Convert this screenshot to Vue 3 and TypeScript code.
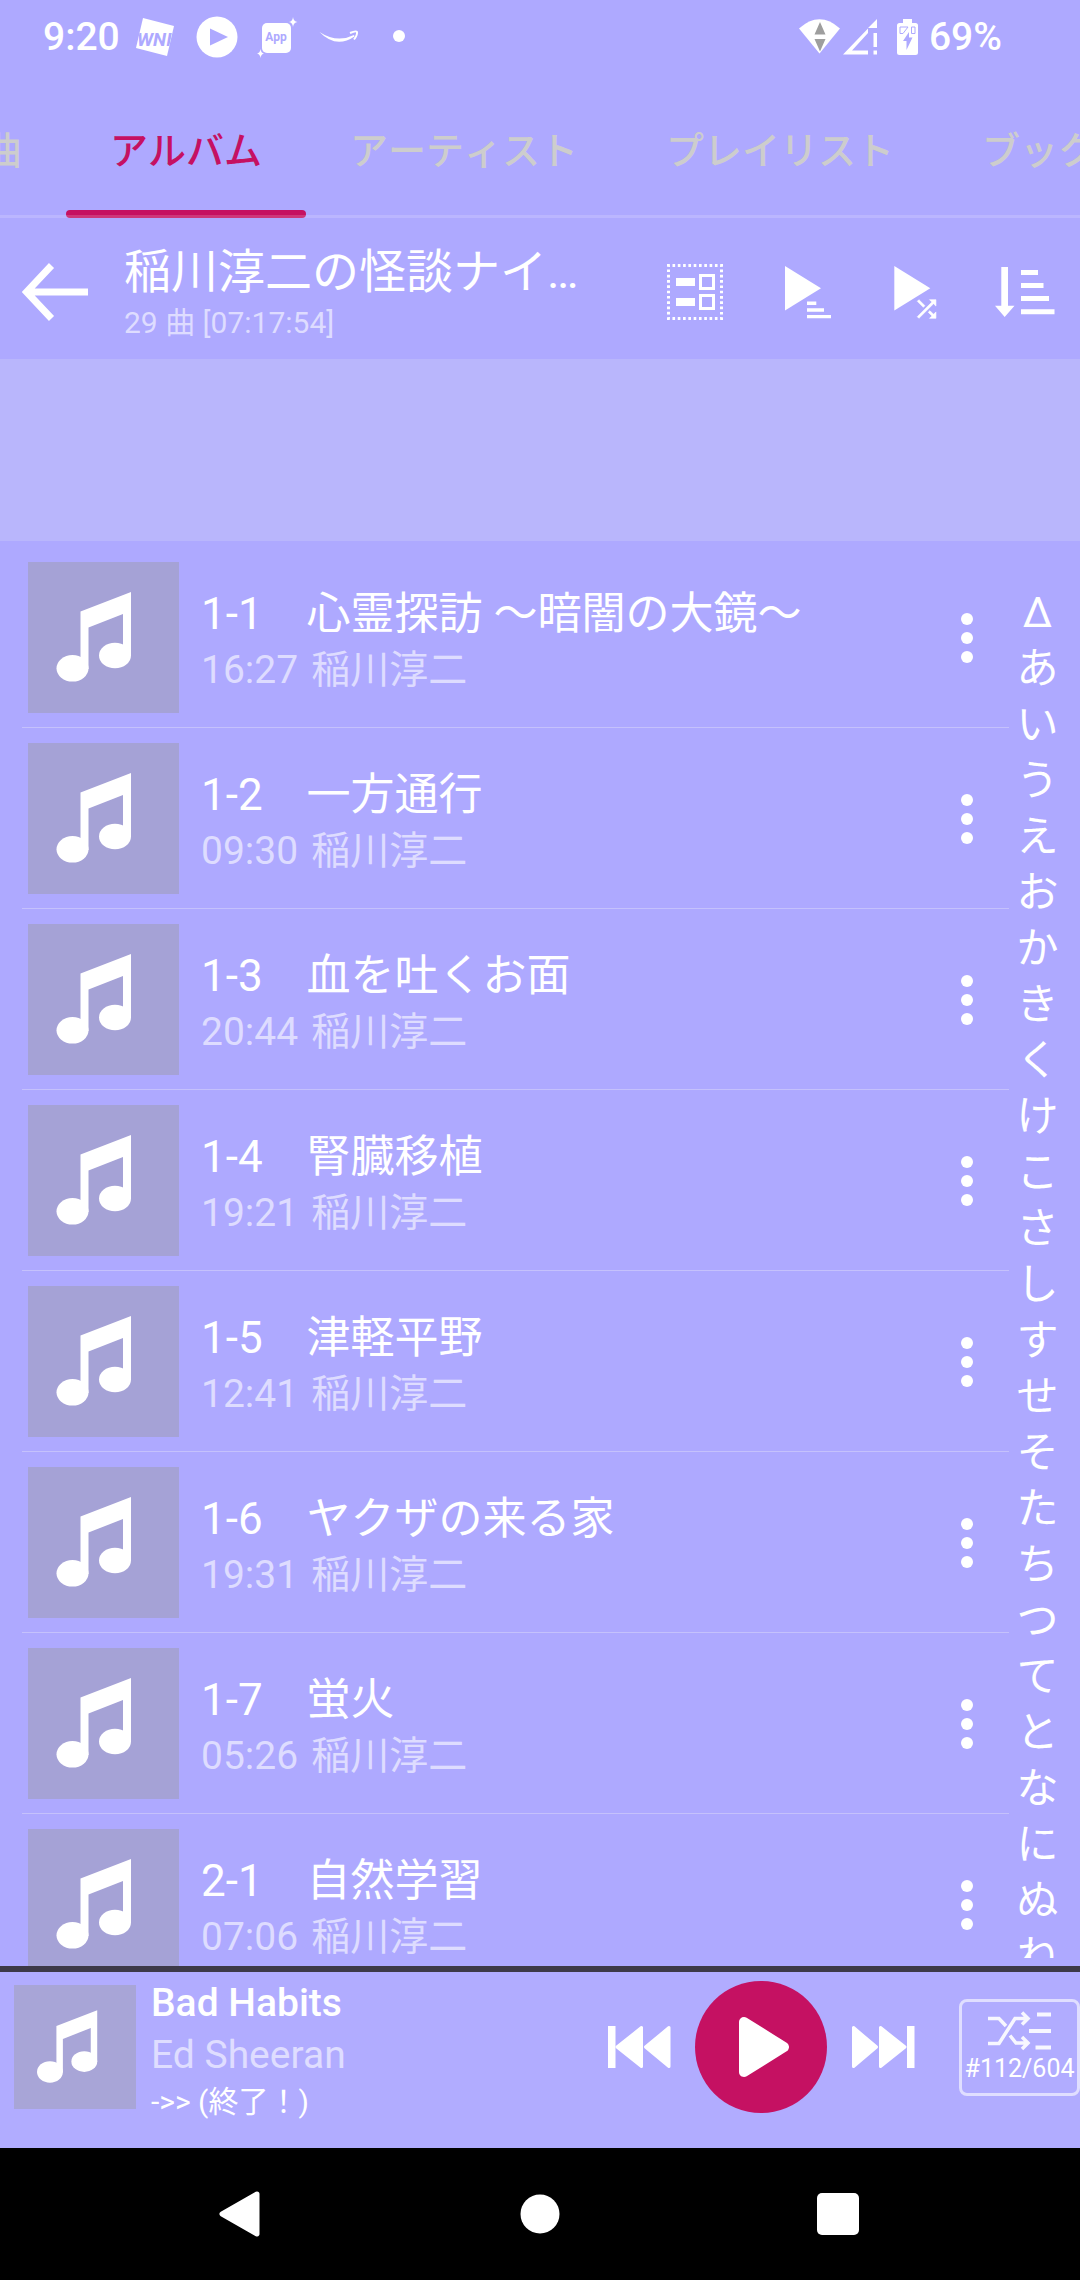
<script setup lang="ts">
import { ref } from 'vue'

interface Track {
  no: string
  title: string
  time: string
  artist: string
}

const tabs: string[] = ['曲', 'アルバム', 'アーティスト', 'プレイリスト', 'ブックマーク']
const activeTab = ref<string>('アルバム')

const artist = '稲川淳二'
const tracks: Track[] = [
  { no: '1-1', title: '心霊探訪 〜暗闇の大鏡〜', time: '16:27', artist },
  { no: '1-2', title: '一方通行', time: '09:30', artist },
  { no: '1-3', title: '血を吐くお面', time: '20:44', artist },
  { no: '1-4', title: '腎臓移植', time: '19:21', artist },
  { no: '1-5', title: '津軽平野', time: '12:41', artist },
  { no: '1-6', title: 'ヤクザの来る家', time: '19:31', artist },
  { no: '1-7', title: '蛍火', time: '05:26', artist },
  { no: '2-1', title: '自然学習', time: '07:06', artist },
]

const indexLetters: string[] = Array.from('Δあいうえおかきくけこさしすせそたちつてとなにぬね')
</script>

<template>
  <div class="screen">
    <header class="status">
      <span class="clock">9:20</span>
      <div class="notices">
        <svg width="40" height="44" viewBox="0 0 40 44">
          <clipPath id="card"><path d="M8 3L39 11L32 41L1 33Z" /></clipPath>
          <path d="M8 3L39 11L32 41L1 33Z" fill="#fff" />
          <text x="2" y="31" class="wn" clip-path="url(#card)">WNI</text>
        </svg>
        <svg width="44" height="44" viewBox="0 0 44 44">
          <circle cx="22" cy="22" r="20.5" fill="#fff" />
          <path d="M15 13.5L33 22L15 30.5Z" fill="#aea9ff" />
        </svg>
        <svg width="40" height="44" viewBox="0 0 40 44">
          <rect x="3" y="8" width="29" height="30" rx="5" fill="#fff" />
          <text x="17" y="26" text-anchor="middle" class="app">App</text>
          <path d="M34 2Q34.500 6.500 38.500 7Q34.500 7.500 34 12Q33.500 7.500 30 7Q33.500 6.500 34 2Z" fill="#fff" />
          <path d="M1.500 34Q2 38 5 38.500Q2 39 1.500 43Q1 39 -2 38.500Q1 38 1.500 34Z" fill="#fff" />
        </svg>
        <svg width="40" height="44" viewBox="0 0 40 44">
          <path d="M.5 17Q18 28.500 35 20L35.500 21.500Q17 34 .5 17Z" fill="#fff" />
          <path d="M31 18Q37 15.500 38 17Q38.500 20 35 24.500" fill="none" stroke="#fff" stroke-width="2" />
        </svg>
        <svg width="40" height="44" viewBox="0 0 40 44">
          <circle cx="20" cy="21" r="6" fill="#fff" />
        </svg>
      </div>
      <div class="system">
        <svg width="41" height="36" viewBox="0 0 41 36">
          <path d="M20.500 34.500L0 9.500Q20.500 -9 41 9.500Z" fill="#fff" />
          <path d="M15.500 15.500L21 3L26.500 15.500ZM15.500 20H26.500L21 32.500Z" fill="#9e9e9e" />
        </svg>
        <svg width="36" height="36" viewBox="0 0 36 36">
          <path d="M35 0V9H26Z M1 35.500L26 9.500V14L10 31.500H26V35.500Z M31.500 14H35V28H31.500Z M31.500 31.500H35V35.500H31.500Z" fill="#fff" />
        </svg>
        <svg class="battery" width="21" height="36" viewBox="0 0 21 36">
          <path d="M6 0H15V4H18.500Q21 4 21 6.500V33.500Q21 36 18.500 36H2.500Q0 36 0 33.500V6.500Q0 4 2.500 4H6Z" fill="#fff" />
          <path d="M11 8L6 14.500H3V8H11M14.500 8H18V14.500H14.500Z" fill="none" stroke="#aea9ff" />
          <path d="M12 13L6 22H9.500V31L15.500 18.500H12Z" fill="#aea9ff" />
        </svg>
        <span>69%</span>
      </div>
    </header>

    <nav class="tabs" role="tablist">
      <button
        v-for="tab in tabs"
        :key="tab"
        type="button"
        role="tab"
        class="tab"
        :class="{ active: tab === activeTab }"
        :aria-selected="tab === activeTab"
        @click="activeTab = tab"
      >{{ tab }}</button>
    </nav>

    <section class="album">
      <button type="button" class="back" aria-label="戻る">
        <svg width="66" height="60" viewBox="0 0 66 60">
          <path d="M29.500 3.500L4.500 30L29.500 56.500M5 30H66" fill="none" stroke="#fff" stroke-width="7" />
        </svg>
      </button>
      <div class="album-text">
        <h1>稲川淳二の怪談ナイ…</h1>
        <p>29 曲 [07:17:54]</p>
      </div>
      <div class="tools">
        <button type="button" aria-label="選択">
          <svg width="72" height="72" viewBox="0 0 72 72" fill="#fff">
            <rect x="9.500" y="9.500" width="53" height="53" fill="none" stroke="#fff" stroke-width="3" stroke-dasharray="2.65" stroke-dashoffset="1.300" />
            <path d="M17 22H36V30H17ZM17 42H36V50H17Z" />
            <path d="M41.500 19.500H54.500V32.500H41.500ZM41.500 39.500H54.500V52.500H41.500Z" fill="none" stroke="#fff" stroke-width="3" />
          </svg>
        </button>
        <button type="button" aria-label="順番に再生">
          <svg width="72" height="72" viewBox="0 0 72 72" fill="#fff">
            <path d="M16 10L52 32.300L16 54.500Z" />
            <path d="M38 45.500H47.300V49H38ZM38 52.300H55V55.700H38ZM38 59H62V62.300H38Z" />
          </svg>
        </button>
        <button type="button" aria-label="シャッフル再生">
          <svg width="72" height="72" viewBox="0 0 72 72" fill="#fff">
            <path d="M15.300 10L51.300 32.300L15.300 54.500Z" />
            <path transform="translate(33.600 39) scale(1.167)" stroke="#fff" stroke-width=".5" d="M10.590 9.170L5.410 4 4 5.410l5.170 5.170 1.420-1.410zM14.500 4l2.040 2.040L4 18.590 5.410 20 17.960 7.460 20 9.500V4h-5.500zm.33 9.410l-1.410 1.410 3.130 3.130L14.500 20H20v-5.500l-2.040 2.040-3.130-3.130z" />
          </svg>
        </button>
        <button type="button" aria-label="並べ替え">
          <svg width="72" height="72" viewBox="0 0 72 72" fill="#fff">
            <path d="M12.300 11H19V49.700H25.500L15.700 61L6 49.700H12.300Z" />
            <path d="M32 14H49V19H32ZM32 27H54.500V32H32ZM32 40H60V45H32ZM32 53.300H65.500V58.300H32Z" />
          </svg>
        </button>
      </div>
    </section>

    <div class="band"></div>

    <main class="content">
      <ul class="tracks">
        <li v-for="track in tracks" :key="track.no" class="track">
          <div class="art">
            <svg viewBox="0 0 151 151" fill="#fff">
              <path d="M103 30V94H95V52L60.500 65.500V107H52.500V49.500Z" />
              <ellipse cx="87" cy="93.500" rx="16" ry="12.800" />
              <ellipse cx="44.500" cy="106.300" rx="16" ry="13.300" />
            </svg>
          </div>
          <div class="track-text">
            <div class="track-title">{{ track.no }}　{{ track.title }}</div>
            <div class="track-meta"><span>{{ track.time }}</span><span>{{ track.artist }}</span></div>
          </div>
          <button type="button" class="more" aria-label="メニュー">
            <svg width="12" height="52" viewBox="0 0 12 52" fill="#fff">
              <circle cx="6" cy="7" r="6" />
              <circle cx="6" cy="26" r="6" />
              <circle cx="6" cy="45" r="6" />
            </svg>
          </button>
        </li>
      </ul>
      <div class="index">
        <span v-for="letter in indexLetters" :key="letter">{{ letter }}</span>
      </div>
    </main>

    <footer class="player">
      <div class="art">
        <svg viewBox="0 0 151 151" fill="#fff">
          <path d="M103 30V94H95V52L60.500 65.500V107H52.500V49.500Z" />
          <ellipse cx="87" cy="93.500" rx="16" ry="12.800" />
          <ellipse cx="44.500" cy="106.300" rx="16" ry="13.300" />
        </svg>
      </div>
      <div class="now">
        <strong>Bad Habits</strong>
        <span class="singer">Ed Sheeran</span>
        <span class="lyric">-&gt;&gt; (終了！)</span>
      </div>
      <div class="controls">
        <button type="button" aria-label="前の曲">
          <svg width="64" height="44" viewBox="0 0 64 44" fill="#fff">
            <path d="M1 1H8.500V43H1Z" />
            <path d="M10 22L34.500 2.500V41.500ZM38.500 22L62 2.500V41.500Z" stroke="#fff" stroke-width="3" stroke-linejoin="round" />
          </svg>
        </button>
        <button type="button" class="play" aria-label="再生">
          <svg width="132" height="132" viewBox="0 0 132 132">
            <path d="M49 41L89 66L49 91Z" fill="#fff" stroke="#fff" stroke-width="10" stroke-linejoin="round" />
          </svg>
        </button>
        <button type="button" aria-label="次の曲">
          <svg width="64" height="44" viewBox="0 0 64 44" fill="#fff">
            <path d="M56 1H63.500V43H56Z" />
            <path d="M54 22L29.500 2.500V41.500ZM25.500 22L2.500 2.500V41.500Z" stroke="#fff" stroke-width="3" stroke-linejoin="round" />
          </svg>
        </button>
      </div>
      <button type="button" class="queue">
        <svg width="64" height="40" viewBox="0 0 64 40" fill="none" stroke="#fff" stroke-opacity=".9" stroke-width="3.500">
          <path d="M0 7.500H11L18 15M0 32.500H11L27 7.500H39M22 24.500L28 32H39M34 1.500L40 7.500L34 13.500M34 26L40 32L34 38" />
          <path d="M49 3.500H63M41 20H63M47.500 36.500H63" stroke-width="4" />
        </svg>
        <span>#112/604</span>
      </button>
    </footer>

    <nav class="system-nav">
      <button type="button" aria-label="戻る">
        <svg width="48" height="48" viewBox="0 0 48 48"><path d="M39 4L4 24L39 44Z" fill="#fff" stroke="#fff" stroke-width="5" stroke-linejoin="round" /></svg>
      </button>
      <button type="button" aria-label="ホーム">
        <svg width="48" height="48" viewBox="0 0 48 48"><circle cx="24" cy="24" r="19.500" fill="#fff" /></svg>
      </button>
      <button type="button" aria-label="履歴">
        <svg width="48" height="48" viewBox="0 0 48 48"><rect x="3" y="3" width="42" height="42" rx="5" fill="#fff" /></svg>
      </button>
    </nav>
  </div>
</template>

<style>
body {
  margin: 0;
  background: #aea9ff;
}
</style>

<style scoped>
.screen {
  display: flex;
  flex-direction: column;
  height: 100vh;
  overflow: hidden;
  background: #aea9ff;
  color: #fff;
  font-family: Roboto, "Noto Sans CJK JP", sans-serif;
}

button {
  margin: 0;
  padding: 0;
  border: 0;
  background: none;
  color: inherit;
  font: inherit;
}

svg {
  display: block;
}

h1,
p,
ul {
  margin: 0;
  padding: 0;
  font-weight: 400;
}

/* status bar */
.status {
  display: flex;
  flex: none;
  align-items: center;
  height: 74px;
  padding: 0 78px 0 43px;
  font-size: 39px;
  font-weight: 500;
}

.notices {
  display: flex;
  gap: 20px;
  margin: 0 auto 0 15px;
}

.notices svg {
  overflow: visible;
}

.wn {
  fill: #aea9ff;
  font-size: 19px;
  font-style: italic;
  font-weight: 700;
}

.app {
  fill: #aea9ff;
  font-size: 12px;
  font-weight: 700;
}

.system {
  display: flex;
  align-items: center;
  gap: 2px;
}

.battery {
  margin: 0 9px 0 17px;
}

/* tabs */
.tabs {
  position: relative;
  display: flex;
  flex: none;
  height: 144px;
  overflow: hidden;
}

.tabs::after {
  content: "";
  position: absolute;
  right: 0;
  bottom: 0;
  left: 0;
  height: 3px;
  background: rgba(255, 255, 255, 0.16);
}

.tab {
  position: relative;
  flex: none;
  padding: 2px 44px 0;
  color: #cdcdcd;
  font-size: 38px;
  font-weight: 500;
  font-kerning: none;
}

.tab:first-child {
  margin-left: -60px;
}

.tab.active {
  color: #c51162;
}

.tab.active::after {
  content: "";
  position: absolute;
  right: 0;
  bottom: 0;
  left: 0;
  height: 8px;
  border-radius: 4px;
  background: #c51162;
}

/* album header */
.album {
  display: flex;
  flex: none;
  align-items: center;
  height: 135px;
  padding-top: 6px;
}

.back {
  flex: none;
  padding: 0 36px 0 22px;
}

.album-text {
  flex: 1;
  min-width: 0;
  white-space: nowrap;
}

.album-text h1 {
  overflow: hidden;
  font-size: 47px;
  line-height: 62px;
  text-overflow: ellipsis;
}

.album-text p {
  color: rgba(255, 255, 255, 0.6);
  font-size: 30px;
  line-height: 40px;
}

.tools {
  display: flex;
  flex: none;
}

.tools button {
  padding: 0 19px;
}

.band {
  flex: none;
  height: 182px;
  background: #b9b6fc;
}

/* track list */
.content {
  display: flex;
  flex: 1;
  min-height: 0;
  overflow: hidden;
}

.tracks {
  flex: 1;
  min-width: 0;
  padding: 6px 0 0 22px;
  list-style: none;
}

.track {
  display: flex;
  height: 151px;
  padding: 15px 0 14px 6px;
  border-bottom: 1px solid #c5c1fc;
}

.art {
  flex: none;
  width: 151px;
  height: 151px;
  background: #a5a2d6;
}

.art svg {
  width: 100%;
  height: 100%;
}

.track-text {
  flex: 1;
  min-width: 0;
  padding: 25px 0 0 22px;
  white-space: nowrap;
}

.track-title {
  font-size: 44px;
  line-height: 54px;
}

.track-meta {
  display: flex;
  gap: 13px;
  color: rgba(255, 255, 255, 0.6);
  font-size: 39px;
  line-height: 58px;
}

.more {
  display: flex;
  flex: none;
  align-items: center;
  justify-content: center;
  width: 84px;
}

.index {
  display: flex;
  flex: none;
  flex-direction: column;
  align-items: center;
  width: 57px;
  margin: 44px 14px 8px 0;
  overflow: hidden;
  font-size: 42px;
  line-height: 56px;
}

.index span {
  flex: none;
}

/* player */
.player {
  display: flex;
  flex: none;
  align-items: center;
  height: 150px;
  padding: 0 0 26px 14px;
  border-top: 6px solid #3d3948;
  background: #b1acff;
}

.player .art {
  width: 122px;
  height: 124px;
  background: #a8a5d7;
}

.now {
  display: flex;
  flex: 1;
  flex-direction: column;
  min-width: 0;
  padding: 6px 0 0 15px;
  font-size: 39px;
  line-height: 52px;
  white-space: nowrap;
}

.now strong {
  font-weight: 500;
}

.singer {
  color: rgba(255, 255, 255, 0.6);
}

.lyric {
  font-size: 30px;
  line-height: 42px;
}

.controls {
  display: flex;
  align-items: center;
  gap: 24px;
}

.play {
  border-radius: 50%;
  background: #c51162;
}

.queue {
  display: flex;
  flex-direction: column;
  align-items: center;
  box-sizing: border-box;
  width: 121px;
  height: 97px;
  margin-left: 44px;
  padding-top: 9px;
  border: 3px solid rgba(255, 255, 255, 0.6);
  border-radius: 8px;
  font-size: 25px;
  line-height: 36px;
}

/* system navigation */
.system-nav {
  display: flex;
  flex: none;
  align-items: center;
  justify-content: center;
  height: 132px;
  background: #000;
}

.system-nav button {
  display: flex;
  justify-content: center;
  width: 298px;
}
</style>
